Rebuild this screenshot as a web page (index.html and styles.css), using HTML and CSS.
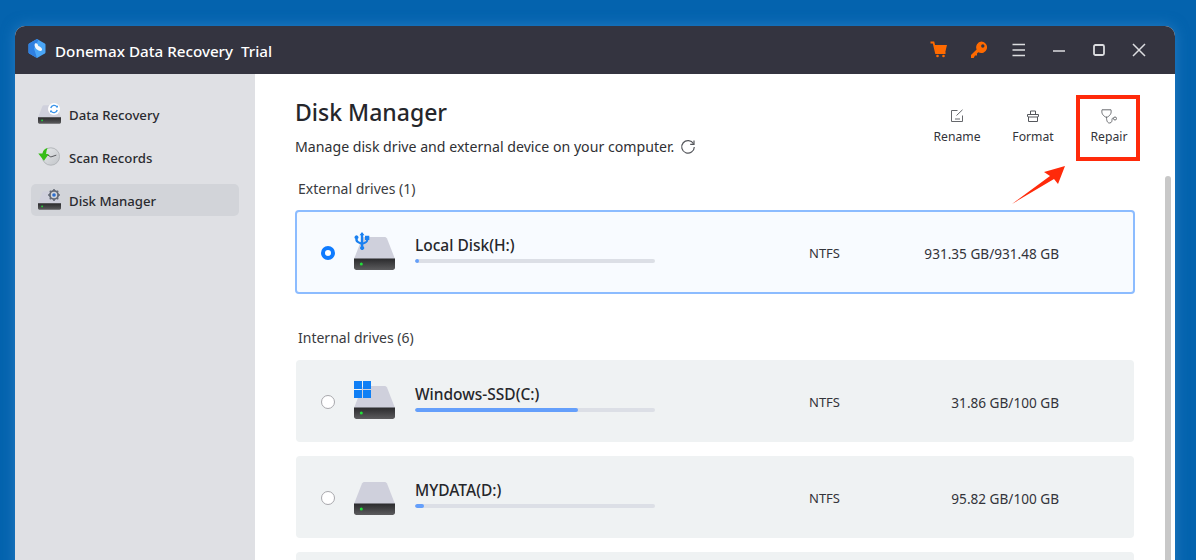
FILE: index.html
```html
<!DOCTYPE html>
<html lang="en">
<head>
<meta charset="utf-8">
<title>Donemax Data Recovery</title>
<link rel="stylesheet" href="styles.css">
</head>
<body>
<svg class="defs" width="0" height="0" aria-hidden="true">
  <defs>
    <linearGradient id="front" x1="0" y1="0" x2="0" y2="1"><stop offset="0" stop-color="#2a2a2c"/><stop offset="1" stop-color="#5c5c5e"/></linearGradient>
    <linearGradient id="clockface" x1="0" y1="0" x2="1" y2="1"><stop offset="0" stop-color="#e8eaec"/><stop offset="1" stop-color="#c2c5c9"/></linearGradient>
    <symbol id="drive" viewBox="0 0 41 33">
      <path d="M8 1.500C8.500 .6 9.300 0 10.500 0H30.500C31.700 0 32.500 .6 33 1.500L41 22H0Z" fill="#cfd0dc"/>
      <path d="M0 21.500H41V30.500C41 32 40 33 38.500 33H2.500C1 33 0 32 0 30.500Z" fill="url(#front)"/>
      <circle cx="7.300" cy="27" r="1.500" fill="#22e03a"/>
    </symbol>
  </defs>
</svg>
<div class="window">
  <header class="titlebar">
    <div class="brand">
      <svg class="logo" viewBox="0 0 20 20"><path d="M10 .5 17.800 5C18.300 5.300 18.500 5.700 18.500 6.200V13.800C18.500 14.300 18.300 14.700 17.800 15L10 19.500 2.200 15C1.700 14.700 1.500 14.300 1.500 13.800V6.200C1.500 5.700 1.700 5.300 2.200 5Z" fill="#4aa6f7"/><path d="M1.500 6.200C1.500 5.700 1.700 5.300 2.200 5L10 .5 11.500 1.500 7 10 10 19.500 2.200 15C1.700 14.700 1.500 14.300 1.500 13.800Z" fill="#2f7fe0"/><path d="M8 5C9.500 4 11 5.500 11.300 7.500 13 8 15.500 9.500 15 11.500 14.400 13 11.500 12.500 10 11 8.300 10 6.800 6.500 8 5Z" fill="#f4f7fb"/></svg>
      <span class="brand-name">Donemax Data Recovery&nbsp; Trial</span>
    </div>
    <div class="controls">
      <svg class="ctl" viewBox="0 0 18 18"><path d="M.5 1.500H3.500L6 12H15.500" fill="none" stroke="#ff6a00" stroke-width="1.800"/><path d="M4.500 4H17L15.300 11H6Z" fill="#ff6a00"/><circle cx="7.500" cy="15" r="1.300" fill="#ff6a00"/><circle cx="13.500" cy="15" r="1.300" fill="#ff6a00"/></svg>
      <svg class="ctl" viewBox="0 0 18 18"><path fill-rule="evenodd" d="M11.500 .5A5.800 5.800 0 1 1 8.300 11.300L7 12.500V14.500H5L3.700 17H1V14L6.600 8.500A5.800 5.800 0 0 1 11.500 .5ZM12.800 3.300A1.700 1.700 0 1 0 12.800 6.700 1.700 1.700 0 1 0 12.800 3.300Z" fill="#ff6a00"/></svg>
      <svg class="ctl" viewBox="0 0 18 18"><path d="M2.500 3.500H15M2.500 9H15M2.500 14.500H15" fill="none" stroke="#dcdde0" stroke-width="1.500"/></svg>
      <svg class="ctl" viewBox="0 0 18 18"><path d="M3 10H15" fill="none" stroke="#dcdde0" stroke-width="1.500"/></svg>
      <svg class="ctl" viewBox="0 0 18 18"><rect x="4" y="4" width="10" height="10" rx="1.500" fill="none" stroke="#dcdde0" stroke-width="1.800"/></svg>
      <svg class="ctl" viewBox="0 0 18 18"><path d="M3 3 15 15M15 3 3 15" fill="none" stroke="#dcdde0" stroke-width="1.500"/></svg>
    </div>
  </header>
  <div class="body">
    <nav class="sidebar">
      <a class="nav">
        <span class="nav-icon">
          <svg class="nav-drive"><use href="#drive"/></svg>
          <svg class="nav-badge nav-badge-refresh" viewBox="0 0 12 12"><circle cx="6" cy="6" r="6" fill="#fff"/><path d="M2.800 5A3.400 3.400 0 0 1 9 4M9.200 7A3.400 3.400 0 0 1 3 8" fill="none" stroke="#3a94ea" stroke-width="1.400"/><path d="M7.800 4.500H10V2.200ZM4.200 7.500H2V9.800Z" fill="#3a94ea"/></svg>
        </span>
        <span class="nav-label">Data Recovery</span>
      </a>
      <a class="nav">
        <span class="nav-icon">
          <svg class="nav-clock" viewBox="0 0 24 20"><circle cx="14" cy="10" r="9.500" fill="url(#clockface)" stroke="#b0b3b7"/><path d="M14 10.500 20 8.500M14 10.500 10 8" stroke="#4e4e52" stroke-width="1" fill="none"/><path d="M10.500 .8C7 1.300 5.300 4 5 6.800L.3 6.800 6.500 14.500 11.800 7.300 8.800 7.200C9 5 9.500 2.800 10.500 .8Z" fill="#36bd18"/></svg>
        </span>
        <span class="nav-label">Scan Records</span>
      </a>
      <a class="nav nav-active">
        <span class="nav-icon">
          <svg class="nav-drive"><use href="#drive"/></svg>
          <svg class="nav-badge nav-badge-gear" viewBox="0 0 12 12"><circle cx="6" cy="6" r="4" fill="none" stroke="#646a76" stroke-width="2.200"/><path d="M6 0V12M0 6H12M1.800 1.800 10.200 10.200M10.200 1.800 1.800 10.200" stroke="#646a76" stroke-width="1.600"/><circle cx="6" cy="6" r="3.200" fill="#d2d4d9"/><circle cx="6" cy="6" r="1.800" fill="#2c6fd0"/></svg>
        </span>
        <span class="nav-label">Disk Manager</span>
      </a>
    </nav>
    <main class="main">
      <div class="head">
        <div class="head-text">
          <h1>Disk Manager</h1>
          <p class="sub">Manage disk drive and external device on your computer.
            <svg class="reload" viewBox="0 0 16 16"><path d="M13.500 4.800A6.300 6.300 0 1 0 14.300 8" fill="none" stroke="#55575c" stroke-width="1.200"/><path d="M14 1.500V5.300H10.200" fill="none" stroke="#55575c" stroke-width="1.200"/></svg>
          </p>
        </div>
        <div class="actions">
          <div class="action action-rename">
            <svg viewBox="0 0 14 14"><path d="M7.500 1.500H1.500V12.500H12.500V6.500M5 10H10M6.500 6.500 12.500 .8" fill="none" stroke="#66686c" stroke-width="1"/></svg>
            Rename
          </div>
          <div class="action action-format">
            <svg viewBox="0 0 14 14"><path d="M1.500 5.500H12.500V7.500L11.500 8V12.500H2.500V8L1.500 7.500ZM4.500 5.500V2H9.500V5.500M2 8H12" fill="none" stroke="#55575c" stroke-width="1"/></svg>
            Format
          </div>
          <div class="action action-repair">
            <svg viewBox="0 0 16 15"><path d="M1 .8H10C10.500 3.500 10 6 6.500 8H4.500C1 6 .5 3.500 1 .8ZM5.500 8C5.500 12 6.500 14 8.500 14 11 14 11 11.500 11 10.500 11 9.500 11.500 9 12.500 9" fill="none" stroke="#6a6c70" stroke-width="1"/><circle cx="14" cy="9.500" r="1.500" fill="none" stroke="#6a6c70" stroke-width="1"/></svg>
            Repair
          </div>
        </div>
      </div>

      <h2 class="group-label">External drives (1)</h2>
      <section class="drive drive-selected">
        <span class="radio radio-on"></span>
        <span class="drive-icon">
          <svg class="hdd"><use href="#drive"/></svg>
          <svg class="usb" viewBox="0 0 16 18"><path d="M8 0 10.500 3.200H9.200V12C9.200 13.500 9.300 14 9.500 14.500A2 2 0 1 1 6.800 14.500C7 14 6.800 13 6.800 12.500 3.500 11 1.300 10.300 1.300 7.500V6.800A1.900 1.900 0 1 1 3.700 6.800V7.500C3.700 9 5.300 9.800 6.800 10.300V3.200H5.500ZM11 3.800H15.300V8H14.300C14.300 10.300 12 11.300 9.200 12.600V10.400C11 9.600 12.200 9.300 12.200 8H11Z" fill="#1a80f0"/></svg>
        </span>
        <div class="drive-info">
          <div class="drive-name">Local Disk(H:)</div>
          <div class="bar"><div class="fill" style="width:1%"></div></div>
        </div>
        <div class="fs">NTFS</div>
        <div class="size">931.35 GB/931.48 GB</div>
      </section>

      <h2 class="group-label group-label-internal">Internal drives (6)</h2>
      <section class="drive">
        <span class="radio"></span>
        <span class="drive-icon">
          <svg class="hdd"><use href="#drive"/></svg>
          <span class="win"><i></i><i></i><i></i><i></i></span>
        </span>
        <div class="drive-info">
          <div class="drive-name">Windows-SSD(C:)</div>
          <div class="bar"><div class="fill" style="width:68%"></div></div>
        </div>
        <div class="fs">NTFS</div>
        <div class="size">31.86 GB/100 GB</div>
      </section>
      <section class="drive">
        <span class="radio"></span>
        <span class="drive-icon"><svg class="hdd"><use href="#drive"/></svg></span>
        <div class="drive-info">
          <div class="drive-name">MYDATA(D:)</div>
          <div class="bar"><div class="fill" style="width:3.800%"></div></div>
        </div>
        <div class="fs">NTFS</div>
        <div class="size">95.82 GB/100 GB</div>
      </section>
      <section class="drive"></section>

      <div class="scrollbar"></div>
    </main>
  </div>
</div>
<div class="callout"></div>
<svg class="arrow" viewBox="0 0 54 38"><path d="M0 38 38 10 32 6 53 0 46 18 42 13Z" fill="#ff2a0a"/></svg>
</body>
</html>
```
FILE: styles.css
```css
* { box-sizing: border-box; }
html, body { height: 100%; }
body {
  margin: 0;
  height: 560px;
  overflow: hidden;
  padding: 26px 21px 0 15px;
  background: #0463ae;
  font-family: "Noto Sans", "Open Sans", sans-serif;
  color: #26272b;
  position: relative;
}
.defs { position: absolute; }
.window {
  height: 560px;
  border-radius: 10px 10px 0 0;
  overflow: hidden;
  background: #fff;
  display: flex;
  flex-direction: column;
  box-shadow: 0 0 14px rgba(70, 150, 215, .5);
}
.titlebar {
  height: 48px;
  flex: none;
  background: #343440;
  color: #fff;
  display: flex;
  align-items: center;
  justify-content: space-between;
  padding: 0 27px 0 12px;
}
.brand { display: flex; align-items: center; gap: 8px; font-size: 15.200px; font-weight: 500; }
.brand-name { padding-top: 2px; }
.logo { width: 20px; height: 21px; margin-top: -4px; }
.controls { display: flex; gap: 22px; }
.ctl { width: 18px; height: 18px; display: block; }
.body { flex: 1; display: flex; min-height: 0; }
.sidebar {
  width: 240px;
  flex: none;
  background: #dfe0e4;
  padding: 24px 16px 0;
  display: flex;
  flex-direction: column;
  gap: 11px;
}
.nav {
  height: 32px;
  border-radius: 5px;
  display: flex;
  align-items: center;
  gap: 8px;
  padding-left: 7px;
  font-size: 13.200px;
  font-weight: 500;
  color: #2a2b30;
}
.nav-label { padding-top: 2px; }
.nav-active { background: #d2d4d9; }
.nav-icon { position: relative; width: 23px; height: 22px; display: block; }
.nav-drive { position: absolute; left: 0; top: 2px; width: 23px; height: 19px; }
.nav-clock { position: absolute; left: 0; top: 1px; width: 22px; height: 19px; }
.nav-badge { position: absolute; width: 12px; height: 12px; left: 10px; top: 0; }
.main {
  flex: 1;
  min-width: 0;
  position: relative;
  padding: 0 40px;
}
.head { display: flex; justify-content: space-between; height: 105px; }
.head-text { padding-top: 22px; }
h1 { margin: 0; font-size: 23px; line-height: 32px; font-weight: 500; color: #25262b; }
.sub { margin: 9px 0 0; font-size: 14.150px; line-height: 20px; color: #2f3034; display: flex; align-items: center; gap: 6px; white-space: nowrap; }
.reload { width: 16px; height: 16px; }
.actions { display: flex; padding-top: 35px; margin-right: -12px; }
.action {
  display: flex;
  flex-direction: column;
  align-items: center;
  font-size: 12.200px;
  line-height: 16px;
  gap: 6px;
  color: #33343a;
  width: 76px;
}
.action svg { width: 14px; height: 14px; display: block; }
.action-repair svg { width: 16px; height: 15px; margin-bottom: -1px; }
.group-label { margin: 0 0 11px 3px; font-size: 14px; line-height: 20px; font-weight: 400; color: #3a3b40; }
.group-label-internal { margin-top: 34px; margin-bottom: 12px; }
.drive {
  height: 82px;
  margin: 0 1px 14px;
  background: #eff2f3;
  border-radius: 4px;
  display: flex;
  align-items: center;
  padding-left: 25px;
}
.drive-selected {
  height: 84px;
  margin: 0;
  background: #f8fbff;
  border: 2px solid #8cbcff;
  padding-left: 24px;
}
.radio {
  width: 14px;
  height: 14px;
  border-radius: 50%;
  background: #fff;
  border: 1px solid #a8a8ac;
  flex: none;
  margin-top: 2px;
}
.radio-on { border: 4px solid #0f7bff; }
.drive-icon { position: relative; width: 41px; height: 38px; margin: -2px 0 0 19px; flex: none; }
.hdd { position: absolute; left: 0; bottom: 0; width: 41px; height: 33px; }
.usb { position: absolute; left: 0; top: 0; width: 16px; height: 18px; }
.win {
  position: absolute;
  left: 0;
  top: 0;
  width: 17px;
  height: 17px;
  display: grid;
  grid-template-columns: 8px 8px;
  grid-template-rows: 8px 8px;
  gap: 1px;
}
.win i { background: #0f7ff5; display: block; }
.drive-info { width: 240px; margin-left: 20px; flex: none; align-self: flex-start; padding-top: 24px; }
.drive-selected .drive-info { padding-top: 23px; }
.drive-name { font-size: 15.500px; line-height: 20px; font-weight: 500; color: #26272b; margin-bottom: 4px; }
.bar { height: 4px; border-radius: 2px; background: #dcdfe6; overflow: hidden; }
.fill { height: 100%; min-width: 4px; border-radius: 2px; background: #649ffb; }
.fs { margin: 2px 0 0 154px; width: 60px; font-size: 13px; color: #33343a; }
.size { flex: 1; margin-top: 2px; text-align: right; padding-right: 75px; font-size: 13.600px; color: #33343a; white-space: nowrap; }
.drive-selected .size { padding-right: 74px; }
.scrollbar {
  position: absolute;
  right: 4px;
  top: 102px;
  bottom: 0;
  width: 6px;
  border-radius: 3px 3px 0 0;
  background: #c8c8c8;
}
.callout {
  position: absolute;
  left: 1076px;
  top: 95px;
  width: 64px;
  height: 66px;
  border: 4px solid #ff2a0a;
}
.arrow { position: absolute; left: 1012px; top: 166px; width: 54px; height: 38px; }
```
